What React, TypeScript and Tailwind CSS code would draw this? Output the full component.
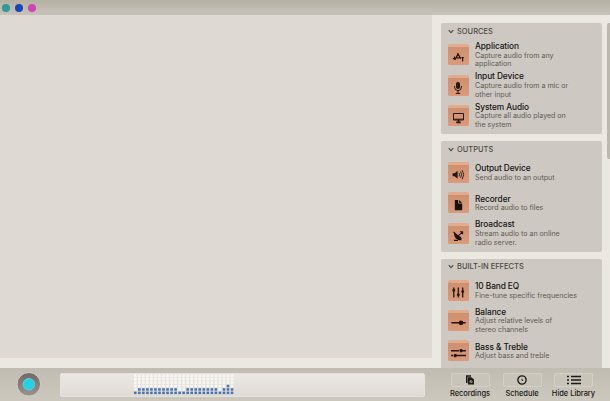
import React from "react";

type Item = { title: string; lines: string[]; icon: React.ReactNode };

const k = { fill: "none", stroke: "#231610", strokeWidth: 1.3 };

const icons = {
  app: (
    <g {...k} strokeWidth={1.2}>
      <path d="M4.8 14.6h1.4M7 15.6l3-5.6M9.6 9l3 5.6M8.6 13.8h3.4M6.4 12.6l.5 3.4M14.6 13v4.4M13.4 13.6h2.4" />
    </g>
  ),
  mic: (
    <g {...k}>
      <rect x="8" y="7" width="4" height="7" rx="2" fill="#231610" stroke="none" />
      <path d="M6.6 11v1.2a3.4 3.4 0 0 0 6.8 0V11M10 15.5v2.8M7.8 18.4h4.4" strokeWidth={1} />
    </g>
  ),
  screen: (
    <g {...k} strokeWidth={1}>
      <path d="M5.5 8.5h10v6.5h-10zM5.5 14.2h10" />
      <path d="M8.3 17.4h4.4M10.5 15v2.4" strokeWidth={1.6} />
    </g>
  ),
  speaker: (
    <g {...k} strokeWidth={0.9}>
      <path d="M4.6 11.2h2l3-2.5v8l-3-2.5h-2z" fill="#231610" stroke="none" />
      <path d="M11 11q1.1 1.7 0 3.4M12.6 9.6q2 3.1 0 6.2M14.2 8.2q3 4.5 0 9" />
    </g>
  ),
  file: <path d="M6.8 8h3.4v3.6h4v6.6H6.8zM11 8l3.2 2.8H11z" fill="#17110d" />,
  dish: (
    <g>
      <path d="M6 9.2c-.5 4.4 2.4 8.3 7.6 8.1l-.6-3.3-2.4-1z" fill="#17110d" />
      <path d="M5.4 8.8l7.8 7M10 13.2l4.4-4M6 17.4h4M12 8.8h2.6v2.4" {...k} strokeWidth={1.1} />
    </g>
  ),
  eq: (
    <g {...k}>
      <path d="M5.8 7.6v10M10.3 7.6v10M14.7 7.6v10" />
      <path d="M4.4 10.2h2.8M8.9 14.8h2.8M13.3 11.4h2.8" strokeWidth={2} />
    </g>
  ),
  balance: (
    <g {...k} strokeWidth={1.6}>
      <path d="M3.4 12.8h14.2" />
      <circle cx="13" cy="12.8" r="2.4" fill="#231610" stroke="none" />
    </g>
  ),
  bass: (
    <g {...k} strokeWidth={1.5}>
      <path d="M3 10.7h8M11.8 10.7h6M3 15.6h2.4M6 15.6h12" />
      <path d="M13 9.1v3.2M7.2 14v3.2" strokeWidth={2.4} />
    </g>
  ),
};

const sections: { name: string; items: Item[] }[] = [
  {
    name: "SOURCES",
    items: [
      { title: "Application", lines: ["Capture audio from any", "application"], icon: icons.app },
      { title: "Input Device", lines: ["Capture audio from a mic or", "other input"], icon: icons.mic },
      { title: "System Audio", lines: ["Capture all audio played on", "the system"], icon: icons.screen },
    ],
  },
  {
    name: "OUTPUTS",
    items: [
      { title: "Output Device", lines: ["Send audio to an output"], icon: icons.speaker },
      { title: "Recorder", lines: ["Record audio to files"], icon: icons.file },
      { title: "Broadcast", lines: ["Stream audio to an online", "radio server."], icon: icons.dish },
    ],
  },
  {
    name: "BUILT-IN EFFECTS",
    items: [
      { title: "10 Band EQ", lines: ["Fine-tune specific frequencies"], icon: icons.eq },
      { title: "Balance", lines: ["Adjust relative levels of", "stereo channels"], icon: icons.balance },
      { title: "Bass & Treble", lines: ["Adjust bass and treble"], icon: icons.bass },
    ],
  },
];

function Row({ item }: { item: Item }) {
  return (
    <div className="flex h-[30.2px] shrink-0 items-center">
      <div className="h-[21px] w-[21px] shrink-0 overflow-hidden rounded-[1.5px] border-t-3 border-[#e2ab8e] bg-linear-to-b from-[#cf9070] to-[#db9b7b]">
        <svg className="-mt-[3px] block" width="21" height="21" viewBox="0 0 21 21">{item.icon}</svg>
      </div>
      <div className="ml-[6px] pt-[1.6px] whitespace-nowrap">
        <div className="text-[8.3px] leading-[9.4px] font-medium tracking-[-0.08px] text-[#161412]">{item.title}</div>
        {item.lines.map((l) => (
          <div key={l} className="text-[7.1px] leading-[8.7px] tracking-[-0.02px] text-[#5f5a54]">{l}</div>
        ))}
      </div>
    </div>
  );
}

const levels = [1, 2, 2, 2, 2, 2, 2, 2, 2, 2, 2, 1, 1, 2, 2, 2, 2, 2, 2, 2, 2, 1, 2, 3, 2];

function Meter() {
  return (
    <svg className="ml-[73px]" width="100" height="22" viewBox="0 0 100 22">
      {levels.map((n, i) =>
        [0, 1, 2, 3, 4, 5].map((r) => (
          <rect key={`${i}-${r}`} x={i * 4.03} y={17.6 - r * 3.4} width="2.6" height="2.5" fill={r < n ? "#4874ae" : "#f9f8f5"} />
        ))
      )}
    </svg>
  );
}

function ToolButton({ label, children, className }: { label: string; children: React.ReactNode; className: string }) {
  return (
    <div className={`flex flex-col items-center ${className}`}>
      <div className="flex h-[14px] w-[39px] items-center justify-center rounded-[2px] border border-[#d4d0c6] bg-[#c8c4ba]">
        {children}
      </div>
      <div className="mt-[2px] text-[7.5px] leading-[10px] font-medium tracking-[-0.04px] whitespace-nowrap text-[#1b1916]">{label}</div>
    </div>
  );
}

export default function App() {
  return (
    <div className="flex h-[401px] w-[610px] flex-col overflow-hidden bg-[#ebe8e1] font-['Inter','Liberation_Sans',sans-serif]">
      <header className="flex h-[15px] shrink-0 items-center gap-[5px] bg-linear-to-b from-[#b6b1a5] to-[#c7c3b8] pl-[2px]">
        <span className="h-2 w-2 rounded-full bg-[#2a9b98]" />
        <span className="h-2 w-2 rounded-full bg-[#1946b8]" />
        <span className="h-2 w-2 rounded-full bg-[#cf46b2]" />
      </header>
      <main className="flex h-[353px] shrink-0 overflow-hidden">
        <div className="h-[343px] w-[432px] shrink-0 bg-[#dedad3]" />
        <aside className="flex flex-1 flex-col gap-[7px] pt-[8px] pl-[9px]">
          {sections.map((s) => (
            <section key={s.name} className="h-[110.8px] w-[161px] shrink-0 rounded-[2px] bg-[#cdc9c2] pl-[7px]">
              <div className="flex h-[16.8px] items-center">
                <svg width="6" height="5" viewBox="0 0 6 5"><path d="M.7 1.2L3 3.6 5.3 1.2" fill="none" stroke="#4d4944" strokeWidth="1.2" /></svg>
                <span className="ml-[3px] text-[7.5px] font-medium text-[#4d4944]">{s.name}</span>
              </div>
              {s.items.map((i) => <Row key={i.title} item={i} />)}
            </section>
          ))}
        </aside>
        <div className="mt-[8px] h-[136px] w-[3px] rounded-l-[2px] bg-[#bdb8af]" />
      </main>
      <footer className="flex h-[33px] shrink-0 bg-linear-to-b from-[#c0bcb1] to-[#ccc8be]">
        <svg className="mt-[4px] ml-[16px]" width="26" height="26" viewBox="0 0 26 26">
          <defs>
            <linearGradient id="ring" x1="0" y1="0" x2="0" y2="1">
              <stop offset="0" stopColor="#6f6966" />
              <stop offset="1" stopColor="#9a948f" />
            </linearGradient>
          </defs>
          <circle cx="12.8" cy="12.3" r="11.8" fill="url(#ring)" stroke="#d5d1c8" />
          <circle cx="12.8" cy="12.3" r="5.8" fill="#22d2e6" stroke="#72c8cd" />
        </svg>
        <div className="mt-[5px] ml-[18px] h-[24px] w-[365px] rounded-[2px] border border-[#e5e2dc] bg-linear-to-b from-[#ebe8e4] to-[#dfdcd6]"><Meter /></div>
        <div className="mt-[5px] ml-[22px] flex">
          <ToolButton label="Recordings" className="w-[46px]">
            <svg width="10" height="10" viewBox="0 0 10 10"><path d="M1 .3h5v1.4H2.6V8H1zM3 2.2h3.5L9 4.6v5H3z" fill="#1d1b18" /><path d="M4.2 6.9h.9l.9-1.8v2.8l.8-1h1" stroke="#cbc7bd" strokeWidth=".7" fill="none" /></svg>
          </ToolButton>
          <ToolButton label="Schedule" className="ml-[6px] w-[46px]">
            <svg width="10" height="10" viewBox="0 0 10 10"><circle cx="5" cy="5" r="4.1" fill="none" stroke="#1d1b18" strokeWidth="1.4" /><path d="M5 3.8v1.6h1.2" fill="none" stroke="#1d1b18" strokeWidth=".9" /></svg>
          </ToolButton>
          <ToolButton label="Hide Library" className="ml-[6px] w-[45px]">
            <svg width="14" height="10" viewBox="0 0 14 10"><path d="M0 1.5h2M4 1.5h10M0 5h2M4 5h10M0 8.5h2M4 8.5h10" stroke="#1d1b18" strokeWidth="1.4" /></svg>
          </ToolButton>
        </div>
      </footer>
    </div>
  );
}
